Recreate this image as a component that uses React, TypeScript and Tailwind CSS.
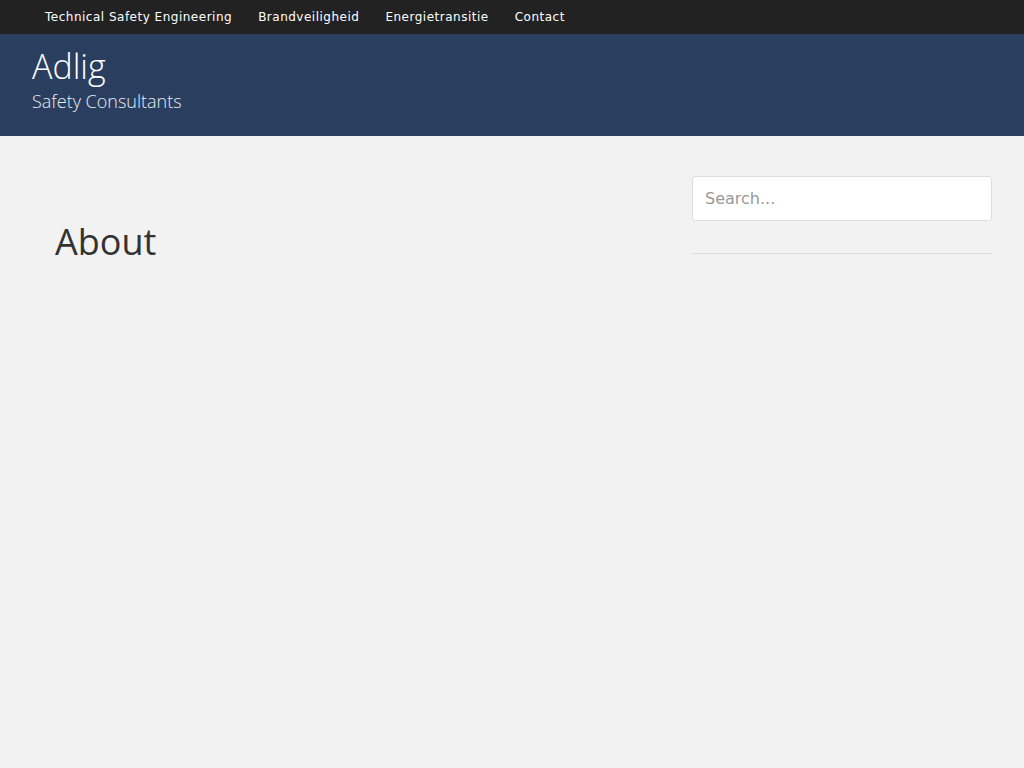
import React from "react";

export default function App() {
  return (
    <div className="min-h-[768px] bg-[#f2f2f2]">
      <div className="h-[34px] bg-[#222222] flex items-center pl-[45px] gap-[26px] text-[12px] text-white tracking-[0.5px]" style={{ fontFamily: '"DejaVu Sans", sans-serif' }}>
        <span>Technical Safety Engineering</span>
        <span>Brandveiligheid</span>
        <span>Energietransitie</span>
        <span>Contact</span>
      </div>
      <div className="h-[102px] bg-[#2a3f5f] pl-[32px] pt-[11px] text-white" style={{ fontFamily: '"Open Sans", sans-serif' }}>
        <div className="text-[34px] font-light leading-[42px]">Adlig</div>
        <div className="text-[18px] font-light leading-[24px] mt-[2px] text-[#e8ecf2]">Safety Consultants</div>
      </div>
      <div className="flex px-[32px] pt-[40px]">
        <div className="flex-1 pl-[23px] pt-[42px]">
          <h1 className="text-[36px] leading-[48px] text-[#333333]" style={{ fontFamily: '"Open Sans", sans-serif' }}>About</h1>
        </div>
        <div className="w-[300px]">
          <input
            placeholder="Search..."
            className="w-full h-[45px] bg-white border border-[#dddddd] rounded-[3px] px-[12px] text-[16px] placeholder-[#999999] outline-none"
            style={{ fontFamily: '"DejaVu Sans", sans-serif' }}
          />
          <div className="mt-[32px] border-t border-[#dddddd]" />
        </div>
      </div>
    </div>
  );
}
